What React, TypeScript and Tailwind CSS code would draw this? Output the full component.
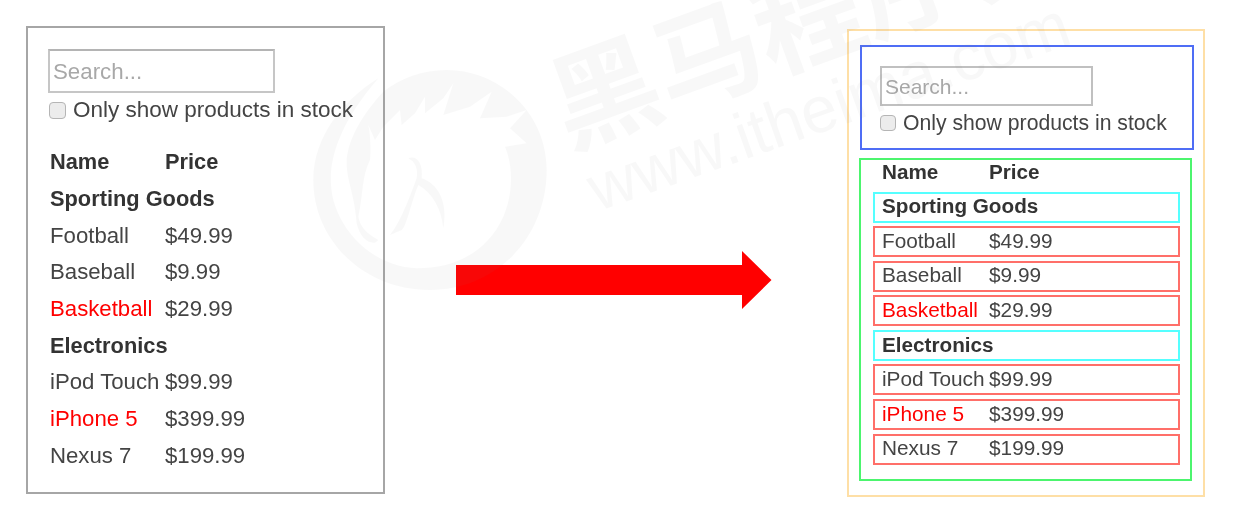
const leftProducts = [
  { name: "Football", price: "$49.99" },
  { name: "Baseball", price: "$9.99" },
  { name: "Basketball", price: "$29.99", out: true },
];

const rightProducts = [
  { name: "iPod Touch", price: "$99.99" },
  { name: "iPhone 5", price: "$399.99", out: true },
  { name: "Nexus 7", price: "$199.99" },
];

function LeftPanel() {
  const row = (p: { name: string; price: string; out?: boolean }) => (
    <div key={p.name} className="grid h-[36.7px] grid-cols-[115px_1fr] items-center text-[22.2px] text-[#444]">
      <span className={p.out ? "text-[#ff0000]" : ""}>{p.name}</span>
      <span>{p.price}</span>
    </div>
  );

  return (
    <div className="h-[468px] w-[359px] shrink-0 border-2 border-[#a6a6a6] pl-[20px] pt-[21px] text-[22.5px] leading-none">
      <input
        type="text"
        placeholder="Search..."
        readOnly
        className="block h-[44px] w-[227px] border-2 border-[#c6c6c6] border-t-[#b4b4b4] pl-[3px] pt-[2px] text-[22.3px] outline-none placeholder:text-[#a8a8a8]"
      />
      <label className="mt-[1px] flex h-[33px] items-center pl-[1px] text-[#444]">
        <input type="checkbox" className="mr-[7px] size-[17px] appearance-none rounded-[4px] border border-[#b5b5b5] bg-[#ececec]" />
        Only show products in stock
      </label>
      <div className="mt-[17px] pl-[2px] text-[21.800px]">
        <div className="grid h-[36.7px] grid-cols-[115px_1fr] items-center font-bold text-[#333]">
          <span>Name</span>
          <span>Price</span>
        </div>
        <div className="flex h-[36.7px] items-center font-bold text-[#333]">Sporting Goods</div>
        {leftProducts.map(row)}
        <div className="flex h-[36.7px] items-center font-bold text-[#333]">Electronics</div>
        {rightProducts.map(row)}
      </div>
    </div>
  );
}

function RightPanel() {
  const row = (p: { name: string; price: string; out?: boolean }) => (
    <div key={p.name} className="grid h-[31px] grid-cols-[107px_1fr] items-center border-2 border-[#ff6f69] pb-[1px] pl-[7px] text-[20.800px] text-[#444]">
      <span className={p.out ? "text-[#ff0000]" : ""}>{p.name}</span>
      <span>{p.price}</span>
    </div>
  );

  return (
    <div className="mt-[3px] h-[468px] w-[358px] shrink-0 border-2 border-[#fedfa6] pl-[11px] pt-[14px] text-[21.2px] leading-none">
      <div className="h-[105px] w-[334px] border-2 border-[#4f6df5] pl-[18px] pt-[19px]">
        <input
          type="text"
          placeholder="Search..."
          readOnly
          className="block h-[40px] w-[213px] border-2 border-[#c0c0c0] pl-[3px] pt-[1px] text-[21px] outline-none placeholder:text-[#a8a8a8]"
        />
        <label className="flex h-[34px] items-center text-[#444]">
          <input type="checkbox" className="mr-[7px] size-[16px] appearance-none rounded-[4px] border border-[#b5b5b5] bg-[#ececec]" />
          Only show products in stock
        </label>
      </div>
      <div className="-ml-px mt-[8px] h-[323px] w-[333px] border-2 border-[#4cf56e] pl-[12px] pr-[10px] text-[20.700px]">
        <div className="grid h-[31.5px] grid-cols-[107px_1fr] items-center pb-[6px] pl-[9px] font-bold text-[#333]">
          <span>Name</span>
          <span>Price</span>
        </div>
        <div className="flex flex-col gap-[3.6px]">
          <div className="flex h-[31px] items-center border-2 border-[#55ffff] pb-[1px] pl-[7px] font-bold text-[#333]">Sporting Goods</div>
          {leftProducts.map(row)}
          <div className="flex h-[31px] items-center border-2 border-[#55ffff] pb-[1px] pl-[7px] font-bold text-[#333]">Electronics</div>
          {rightProducts.map(row)}
        </div>
      </div>
    </div>
  );
}

function Arrow() {
  return (
    <svg width="316" height="58" viewBox="0 0 316 58" className="ml-[71px] mr-[75px] mt-[225px] shrink-0">
      <path d="M0 14H286V0L315.500 29L286 58V44H0Z" fill="#ff0000" />
    </svg>
  );
}

// faint logo and site name that lie over the whole picture
function Watermark() {
  return (
    <div className="pointer-events-none absolute inset-0 overflow-hidden">
      <svg width="260" height="250" viewBox="0 0 780 750" className="absolute left-[300px] top-[50px]">
        <path
          fill="#777777"
          fillOpacity="0.055"
          d="M235 85C130 150 40 260 40 390C40 570 190 720 390 720C590 720 740 560 740 360C740 190 600 60 440 60C370 60 300 85 250 125C190 190 140 270 140 340C140 390 165 440 170 520C180 560 200 580 225 578L235 570C200 550 180 530 175 500C190 430 185 380 210 330C215 270 205 225 205 225L225 270L250 230L300 180L305 225L345 190L375 140L375 190L430 145L460 100L430 195L510 170L575 125L540 205L620 200L680 180L630 235L680 280L615 290C640 350 640 430 610 500C560 610 460 655 350 655C230 650 130 560 100 450C75 350 110 230 235 85Z"
        />
        <path
          fill="#777777"
          fillOpacity="0.055"
          d="M325 325C350 315 370 340 365 385C410 400 445 450 430 535C425 480 400 430 355 405C335 450 320 530 305 540L270 555C300 520 330 440 350 385C355 355 345 335 325 325Z"
        />
      </svg>
      <div className="absolute left-[552px] top-[50px] origin-left -rotate-[20deg] whitespace-nowrap font-['Noto_Sans_CJK_SC',sans-serif] text-[108px] font-bold leading-none text-[#777777]/[0.055]">
        黑马程序员
      </div>
      <div className="absolute left-[590px] top-[158px] origin-left -rotate-[19.500deg] whitespace-nowrap font-['Liberation_Sans',sans-serif] text-[65px] leading-none text-[#777777]/[0.055]">
        www.itheima.com
      </div>
    </div>
  );
}

export default function App() {
  return (
    <div className="relative h-[522px] w-[1243px] overflow-hidden bg-white font-['Liberation_Sans',Arial,sans-serif]">
      <div className="flex items-start pl-[26px] pt-[26px] blur-[0.4px]">
        <LeftPanel />
        <Arrow />
        <RightPanel />
      </div>
      <Watermark />
    </div>
  );
}
